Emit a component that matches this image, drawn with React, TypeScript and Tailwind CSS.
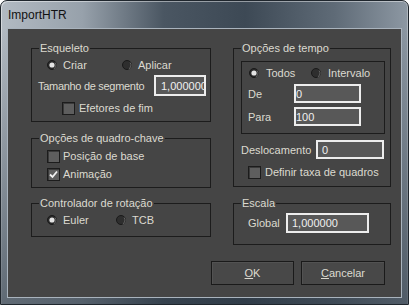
import React from 'react';

const textCls = 'text-[#dcdad0] leading-[14px] whitespace-nowrap';

const Radio = ({ checked }: { checked?: boolean }) => (
  <svg width="10" height="10" viewBox="0 0 10 10" className="shrink-0">
    <circle cx="5" cy="5" r="4.5" fill={checked ? '#2a2a2a' : '#2e2e2e'} stroke="#1a1a1a" />
    <path d="M8.2 2.6 A4.3 4.3 0 0 1 6.8 8.9" fill="none" stroke="#6a6a6a" strokeWidth="1" />
    {checked && <circle cx="5" cy="5" r="2.6" fill="#e4e4e4" />}
  </svg>
);

const Check = ({ checked }: { checked?: boolean }) => (
  <span className="w-[13px] h-[13px] shrink-0 border border-[#1c1c1c] bg-[#5e5e5e] flex items-center justify-center shadow-[inset_1px_1px_0_#3a3a3a]">
    {checked && (
      <svg width="9" height="9" viewBox="0 0 9 9">
        <path d="M1 4.5 L3.5 7 L8 1.5" fill="none" stroke="#f2f2f2" strokeWidth="1.8" />
      </svg>
    )}
  </span>
);

const Field = ({ value, className, pad }: { value: string; className: string; pad: string }) => (
  <div className={`border-2 border-[#ededed] bg-[#585858] flex items-center overflow-hidden ${pad} ${className}`}>
    <span className="text-[#f0f0f0] leading-[14px] whitespace-nowrap">{value}</span>
  </div>
);

const Group = ({ label, className, children }: { label?: string; className: string; children?: React.ReactNode }) => (
  <div className={`relative border border-[#1c1c1c] flex flex-col shrink-0 ${className}`}>
    {label && (
      <span className={`absolute left-[7px] -top-[8px] px-[1px] bg-[#454545] ${textCls}`}>{label}</span>
    )}
    {children}
  </div>
);

export default function App() {
  return (
    <div className="w-[409px] h-[305px] font-['Liberation_Sans',Arial,sans-serif] text-[11px] bg-[linear-gradient(90deg,#b2bac2_0%,#97a1ab_20%,#4a5662_40%,#3d4955_60%,#5f6b77_82%,#8d98a3_100%)] border border-[#1f262d] rounded-t-[7px] flex flex-col overflow-hidden shadow-[inset_1px_1px_0_rgba(255,255,255,0.45),inset_-1px_0_0_rgba(255,255,255,0.3)]">
      <div className="h-[27px] shrink-0 flex items-center pl-[7px]">
        <span className="text-[12px] text-[#111] leading-[14px]">ImportHTR</span>
      </div>
      <div className="flex-1 flex flex-col px-[6px] pb-[6px] bg-[linear-gradient(180deg,rgba(0,0,0,0)_0%,rgba(40,52,64,0.6)_100%)]">
        <div className="flex-1 border border-[#a9b3bd] bg-[#454545] flex flex-col pt-[19px] pl-[23px]">
          <div className="flex gap-[22px]">
            {/* left column */}
            <div className="flex flex-col w-[180px]">
              <Group label="Esqueleto" className="w-[180px] h-[74px]">
                <div className="flex items-center h-[14px] mt-[9px] pl-[15px]">
                  <div className="w-[75px] flex items-center gap-[6px]">
                    <Radio checked />
                    <span className={textCls}>Criar</span>
                  </div>
                  <div className="flex items-center gap-[6px]">
                    <Radio />
                    <span className={textCls}>Aplicar</span>
                  </div>
                </div>
                <div className="flex items-center h-[21px] mt-[3px] pl-[6px]">
                  <span className={`w-[116px] shrink-0 tracking-[-0.3px] ${textCls}`}>Tamanho de segmento</span>
                  <Field value="1,000000" className="w-[52px] h-[21px]" pad="pl-[5px]" />
                </div>
                <div className="flex items-center gap-[4px] mt-[5px] pl-[30px]">
                  <Check />
                  <span className={textCls}>Efetores de fim</span>
                </div>
              </Group>

              <Group label="Opções de quadro-chave" className="w-[180px] h-[50px] mt-[16px]">
                <div className="flex items-center gap-[3px] mt-[10px] pl-[15px]">
                  <Check />
                  <span className={textCls}>Posição de base</span>
                </div>
                <div className="flex items-center gap-[3px] mt-[4px] pl-[15px]">
                  <Check checked />
                  <span className={textCls}>Animação</span>
                </div>
              </Group>

              <Group label="Controlador de rotação" className="w-[180px] h-[34px] mt-[15px]">
                <div className="flex items-center h-[14px] mt-[9px] pl-[15px]">
                  <div className="w-[69px] flex items-center gap-[6px]">
                    <Radio checked />
                    <span className={textCls}>Euler</span>
                  </div>
                  <div className="flex items-center gap-[6px]">
                    <Radio />
                    <span className={textCls}>TCB</span>
                  </div>
                </div>
              </Group>
            </div>

            {/* right column */}
            <div className="flex flex-col w-[158px]">
              <Group label="Opções de tempo" className="w-[158px] h-[139px]">
                <Group className="w-[144px] h-[73px] mt-[12px] ml-[7px]">
                  <div className="flex items-center h-[14px] mt-[4px] pl-[7px]">
                    <div className="w-[62px] flex items-center gap-[7px]">
                      <Radio checked />
                      <span className={textCls}>Todos</span>
                    </div>
                    <div className="flex items-center gap-[7px]">
                      <Radio />
                      <span className={textCls}>Intervalo</span>
                    </div>
                  </div>
                  <div className="flex items-center h-[19px] mt-[4px] pl-[6px]">
                    <span className={`w-[46px] shrink-0 ${textCls}`}>De</span>
                    <Field value="0" className="w-[67px] h-[19px]" pad="pl-[0px]" />
                  </div>
                  <div className="flex items-center h-[19px] mt-[4px] pl-[6px]">
                    <span className={`w-[46px] shrink-0 ${textCls}`}>Para</span>
                    <Field value="100" className="w-[67px] h-[19px]" pad="pl-[0px]" />
                  </div>
                </Group>
                <div className="flex items-center h-[19px] mt-[6px] pl-[7px]">
                  <span className={`w-[75px] shrink-0 ${textCls}`}>Deslocamento</span>
                  <Field value="0" className="w-[68px] h-[19px]" pad="pl-[4px]" />
                </div>
                <div className="flex items-center gap-[4px] mt-[6px] pl-[14px]">
                  <Check />
                  <span className={textCls}>Definir taxa de quadros</span>
                </div>
              </Group>

              <Group label="Escala" className="w-[158px] h-[42px] mt-[16px]">
                <div className="flex items-center h-[20px] mt-[9px] pl-[14px]">
                  <span className={`w-[38px] shrink-0 ${textCls}`}>Global</span>
                  <Field value="1,000000" className="w-[83px] h-[20px]" pad="pl-[4px]" />
                </div>
              </Group>
            </div>
          </div>

          <div className="flex gap-[7px] mt-[16px] ml-[180px]">
            <button className="w-[83px] h-[24px] border border-[#1a1a1a] bg-[#484848] flex items-center justify-center shadow-[inset_1px_1px_0_#525252]">
              <span className={textCls}><span className="underline">O</span>K</span>
            </button>
            <button className="w-[84px] h-[24px] border border-[#1a1a1a] bg-[#484848] flex items-center justify-center shadow-[inset_1px_1px_0_#525252]">
              <span className={textCls}><span className="underline">C</span>ancelar</span>
            </button>
          </div>
        </div>
      </div>
    </div>
  );
}
